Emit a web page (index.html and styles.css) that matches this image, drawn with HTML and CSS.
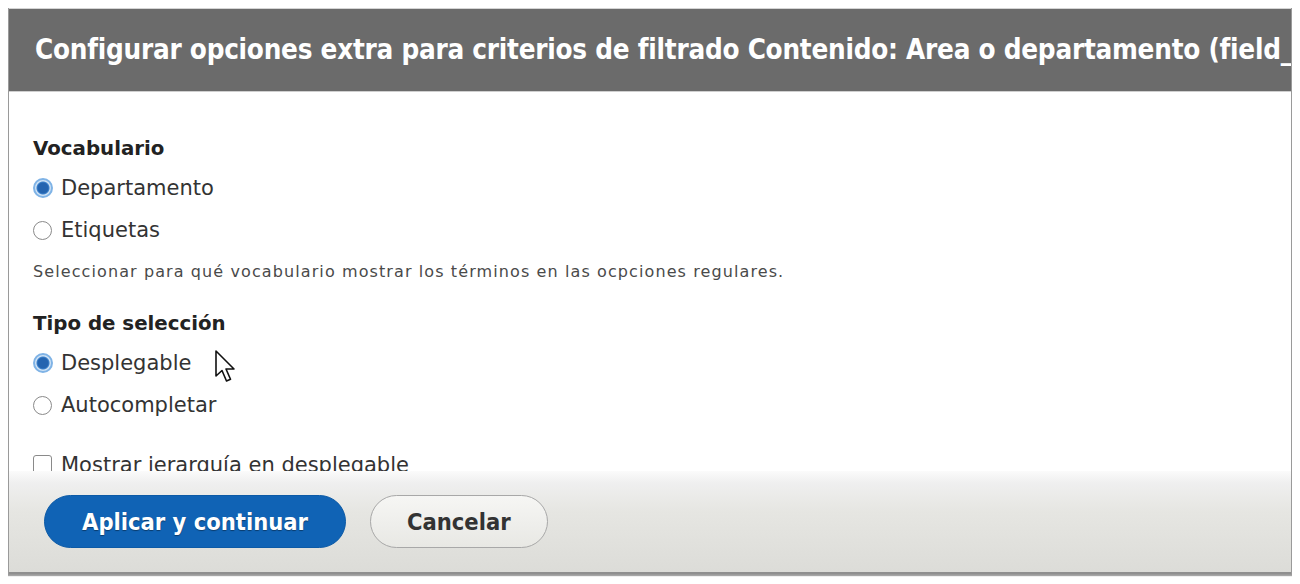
FILE: index.html
```html
<!DOCTYPE html>
<html lang="es">
<head>
<meta charset="utf-8">
<title>Configurar opciones extra</title>
<link rel="stylesheet" href="styles.css">
</head>
<body>
<div class="dialog">
  <div class="dialog-header">
    <h1 class="dialog-title">Configurar opciones extra para criterios de filtrado Contenido: Area o departamento (field_area_o_departamento)</h1>
  </div>
  <div class="dialog-content">
    <div class="field">
      <div class="field-label">Vocabulario</div>
      <label class="option"><span class="radio checked"></span><span class="option-text">Departamento</span></label>
      <label class="option"><span class="radio"></span><span class="option-text">Etiquetas</span></label>
      <div class="description">Seleccionar para qué vocabulario mostrar los términos en las ocpciones regulares.</div>
    </div>
    <div class="field field-type">
      <div class="field-label">Tipo de selección</div>
      <label class="option"><span class="radio checked"></span><span class="option-text">Desplegable</span></label>
      <label class="option"><span class="radio"></span><span class="option-text">Autocompletar</span></label>
    </div>
    <label class="option option-check"><span class="checkbox"></span><span class="option-text">Mostrar jerarquía en desplegable</span></label>
    <svg class="cursor" width="24" height="36" viewBox="0 0 24 36" aria-hidden="true">
      <path d="M2 2 L2 27 L8 21.5 L12.5 32 L16.5 30.3 L12 20 L20 20 Z" fill="#fff" stroke="#111" stroke-width="1.6" stroke-linejoin="round"/>
    </svg>
  </div>
  <div class="dialog-footer">
    <button class="button button-primary" type="button">Aplicar y continuar</button>
    <button class="button" type="button">Cancelar</button>
  </div>
</div>
</body>
</html>
```

FILE: styles.css
```css
html, body {
  height: 100%;
}
body {
  margin: 8px;
  background: #ffffff;
  font-family: "DejaVu Sans", Verdana, sans-serif;
  color: #333;
  box-sizing: border-box;
  height: 584px;
  overflow: hidden;
}
.dialog {
  display: flex;
  flex-direction: column;
  height: 567px;
  border: 1px solid #9a9a9a;
  border-top: 0;
  box-sizing: border-box;
  box-shadow: 0 1px 1px rgba(0,0,0,0.35);
  background: #fff;
  overflow: hidden;
}
.dialog-header {
  flex: 0 0 auto;
  height: 84px;
  background: #6b6b6b;
  border-top: 1px solid #d4d4d4;
  display: flex;
  align-items: center;
  padding-left: 26px;
  overflow: hidden;
  border-bottom: 1px solid #cfcfcf;
  box-sizing: border-box;
}
.dialog-title {
  margin: 0;
  color: #fff;
  font-family: "DejaVu Sans Condensed", "DejaVu Sans", sans-serif;
  font-weight: bold;
  font-size: 27.6px;
  letter-spacing: -0.25px;
  white-space: nowrap;
  line-height: 32px;
}
.dialog-content {
  flex: 1 1 auto;
  position: relative;
  overflow: hidden;
  padding: 43px 24px 0 24px;
}
.field-label {
  font-weight: bold;
  font-size: 19.8px;
  line-height: 28px;
  color: #222;
  margin-bottom: 4px;
}
.option {
  display: flex;
  align-items: center;
  height: 42px;
  font-size: 21px;
  color: #333;
}
.option-text {
  margin-left: 9px;
}
.radio {
  width: 19px;
  height: 19px;
  border-radius: 50%;
  border: 1px solid #8a8a8a;
  background: #fff;
  box-sizing: border-box;
  flex: 0 0 auto;
}
.radio.checked {
  width: 20px;
  height: 20px;
  margin-left: -0.5px;
  margin-right: -0.5px;
  border: 2px solid #7fb3e6;
  background: radial-gradient(circle, #2464b0 0 5px, #3e83cc 6px, #cfe2f5 7px);
}
.description {
  margin-top: 11px;
  font-size: 16px;
  letter-spacing: 1.1px;
  line-height: 20px;
  color: #4a4a4a;
}
.field-type {
  margin-top: 28px;
}
.option-check {
  margin-top: 18px;
}
.checkbox {
  width: 19px;
  height: 20px;
  border: 1px solid #8a8a8a;
  border-radius: 3px;
  box-sizing: border-box;
  background: #fff;
  flex: 0 0 auto;
}
.cursor {
  position: absolute;
  left: 205px;
  top: 257px;
}
.dialog-footer {
  flex: 0 0 auto;
  height: 103px;
  box-sizing: border-box;
  display: flex;
  align-items: center;
  gap: 24px;
  padding: 0 0 0 35px;
  background: linear-gradient(#fbfbfb 0px, #efefef 12px, #e6e6e2 40px, #dcdcd8 100%);
  border-bottom: 2px solid #8f8f8f;
}
.button {
  height: 53px;
  border-radius: 27px;
  border: 1px solid #a8a8a8;
  background: linear-gradient(#f6f6f4, #e8e8e4);
  color: #333;
  font-family: "DejaVu Sans Condensed", "DejaVu Sans", sans-serif;
  font-weight: bold;
  font-size: 23.5px;
  padding: 0 36px;
  cursor: pointer;
}
.button-primary {
  background: #1063b5;
  border-color: #0c5aa6;
  color: #fff;
  width: 302px;
  padding: 0;
  text-shadow: 0 1px 1px rgba(0,0,0,0.4);
}
```
